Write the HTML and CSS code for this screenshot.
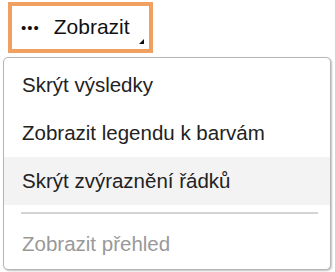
FILE: index.html
```html
<!DOCTYPE html>
<html lang="cs">
<head>
    <meta charset="UTF-8">
    <title>Zobrazit</title>
    <link rel="stylesheet" href="styles.css">
</head>
<body>
<div class="toolbar">
    <button class="view-btn">
        <span class="dots">&bull;&bull;&bull;</span>
        <span class="label">Zobrazit</span>
        <span class="corner"></span>
    </button>
</div>

<ul class="menu">
    <li class="item">Skrýt výsledky</li>
    <li class="item">Zobrazit legendu k barvám</li>
    <li class="item hover">Skrýt zvýraznění řádků</li>
    <li class="sep"></li>
    <li class="item disabled">Zobrazit přehled</li>
</ul>
</body>
</html>
```

FILE: styles.css
```css
body {
    margin: 0;
    width: 335px;
    height: 272px;
    background: #fff;
    font-family: "Liberation Sans", Arial, sans-serif;
    color: #222;
    overflow: hidden;
}

.toolbar {
    padding: 2px 0 0 8px;
    height: 55px;
}

.view-btn {
    position: relative;
    display: flex;
    align-items: center;
    width: 145px;
    height: 51px;
    box-sizing: border-box;
    border: 4px solid #f0a060;
    background: #fff;
    padding: 0 0 0 9px;
    font-family: inherit;
    font-size: 21px;
    color: #111;
}

.dots {
    font-size: 15px;
    letter-spacing: 1px;
    margin-right: 14px;
}

.label {
    margin-top: -2px;
}

.corner {
    position: absolute;
    right: 5px;
    bottom: 5px;
    width: 0;
    height: 0;
    border-left: 5px solid transparent;
    border-bottom: 5px solid #111;
}

.menu {
    list-style: none;
    margin: 0 0 0 3px;
    padding: 3px 0 0 0;
    width: 328px;
    height: 213px;
    box-sizing: border-box;
    border: 1px solid #b5b5b5;
    border-radius: 5px;
    box-shadow: 1px 1px 2px rgba(0, 0, 0, 0.25);
    background: #fff;
}

.item {
    height: 48px;
    line-height: 48px;
    padding-left: 18px;
    font-size: 20.5px;
}

.item.hover {
    background: #f3f3f3;
}

.item.disabled {
    color: #999;
}

.sep {
    height: 2px;
    margin: 7px 12px 6px 17px;
    background: #d4d4d4;
}
```
